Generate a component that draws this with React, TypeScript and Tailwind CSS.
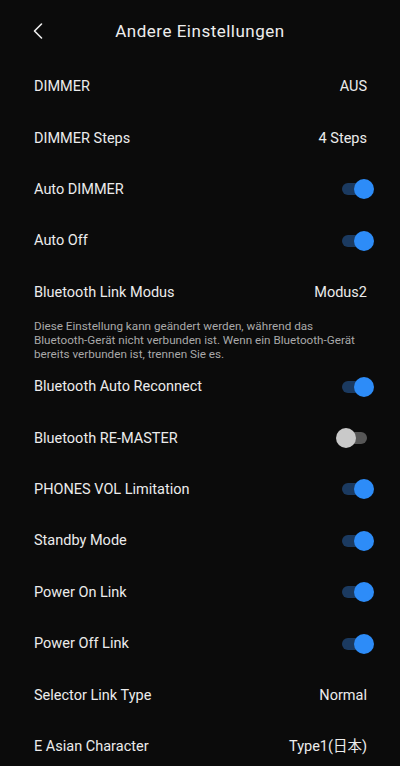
import { ChevronLeft } from 'lucide-react';

type Row =
    | { kind: 'value'; label: string; value: string }
    | { kind: 'toggle'; label: string; on: boolean };

const topRows: Row[] = [
    { kind: 'value', label: 'DIMMER', value: 'AUS' },
    { kind: 'value', label: 'DIMMER Steps', value: '4 Steps' },
    { kind: 'toggle', label: 'Auto DIMMER', on: true },
    { kind: 'toggle', label: 'Auto Off', on: true },
    { kind: 'value', label: 'Bluetooth Link Modus', value: 'Modus2' },
];

const bottomRows: Row[] = [
    { kind: 'toggle', label: 'Bluetooth Auto Reconnect', on: true },
    { kind: 'toggle', label: 'Bluetooth RE-MASTER', on: false },
    { kind: 'toggle', label: 'PHONES VOL Limitation', on: true },
    { kind: 'toggle', label: 'Standby Mode', on: true },
    { kind: 'toggle', label: 'Power On Link', on: true },
    { kind: 'toggle', label: 'Power Off Link', on: true },
    { kind: 'value', label: 'Selector Link Type', value: 'Normal' },
    { kind: 'value', label: 'E Asian Character', value: 'Type1(日本)' },
];

function Toggle({ on }: { on: boolean }) {
    return (
        <div className="relative w-[32px] h-[20px] flex items-center">
            <div className={`ml-[7px] w-[25px] h-[12px] rounded-full ${on ? 'bg-[#1b3a60]' : 'bg-[#575757]'}`} />
            <div
                className={`absolute top-0 w-[20px] h-[20px] rounded-full ${on ? 'right-[-7px] bg-[#2d8cf8]' : 'left-[1px] bg-[#c9c9c9]'}`}
            />
        </div>
    );
}

function SettingRow({ row }: { row: Row }) {
    return (
        <div className="h-[51.4px] flex items-center justify-between pl-[34px] pr-[33px]">
            <span className="text-[14.5px] text-[#ececec] mt-[1px]">{row.label}</span>
            {row.kind === 'value' ? (
                <span className="text-[14.5px] text-[#ececec] mt-[1px]">{row.value}</span>
            ) : (
                <Toggle on={row.on} />
            )}
        </div>
    );
}

export default function App() {
    return (
        <div
            className="w-[400px] h-[766px] overflow-hidden bg-[#0b0b0b] text-white"
            style={{ fontFamily: 'Roboto, "Noto Sans CJK JP", sans-serif' }}
        >
            <div className="relative h-[61px] flex items-center justify-center">
                <ChevronLeft
                    size={28}
                    strokeWidth={1.4}
                    className="absolute left-[24px] top-[17px] text-[#eeeeee]"
                />
                <h1 className="text-[17px] text-[#eeeeee] tracking-[0.5px] mt-[2px]">Andere Einstellungen</h1>
            </div>

            {topRows.map((row) => (
                <SettingRow key={row.label} row={row} />
            ))}

            <p className="px-[34px] pt-[1px] text-[11.7px] leading-[14px] text-[#a9a9a9] h-[43px]">
                Diese Einstellung kann geändert werden, während das Bluetooth-Gerät nicht verbunden ist. Wenn ein Bluetooth-Gerät bereits verbunden ist, trennen Sie es.
            </p>

            {bottomRows.map((row) => (
                <SettingRow key={row.label} row={row} />
            ))}
        </div>
    );
}
